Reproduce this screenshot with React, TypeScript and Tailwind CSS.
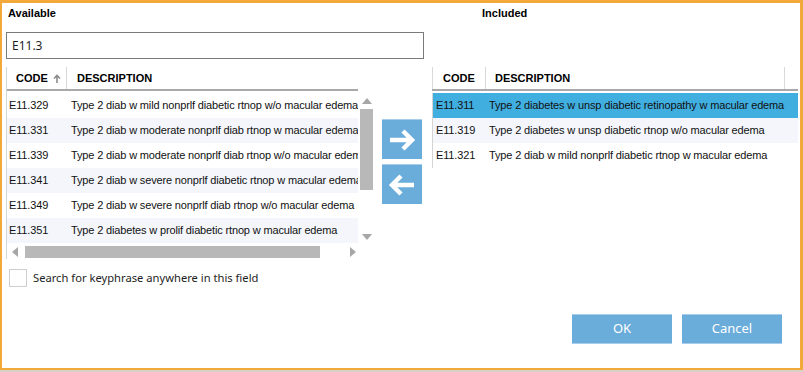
import React from "react";

const available = [
  ["E11.329", "Type 2 diab w mild nonprlf diabetic rtnop w/o macular edema"],
  ["E11.331", "Type 2 diab w moderate nonprlf diab rtnop w macular edema"],
  ["E11.339", "Type 2 diab w moderate nonprlf diab rtnop w/o macular edema"],
  ["E11.341", "Type 2 diab w severe nonprlf diabetic rtnop w macular edema"],
  ["E11.349", "Type 2 diab w severe nonprlf diab rtnop w/o macular edema"],
  ["E11.351", "Type 2 diabetes w prolif diabetic rtnop w macular edema"],
];

const included = [
  ["E11.311", "Type 2 diabetes w unsp diabetic retinopathy w macular edema"],
  ["E11.319", "Type 2 diabetes w unsp diabetic rtnop w/o macular edema"],
  ["E11.321", "Type 2 diab w mild nonprlf diabetic rtnop w macular edema"],
];

const gridFont = { fontFamily: '"Liberation Sans", Arial, sans-serif' };
const uiFont = { fontFamily: '"Noto Sans", "Open Sans", sans-serif' };

const Triangle = ({ dir }: { dir: "up" | "down" | "left" | "right" }) => {
  const pts = {
    up: "0,6 5,0 10,6",
    down: "0,0 10,0 5,6",
    left: "6,0 6,10 0,5",
    right: "0,0 0,10 6,5",
  }[dir];
  const vertical = dir === "up" || dir === "down";
  return (
    <svg width={vertical ? 10 : 6} height={vertical ? 6 : 10}>
      <polygon points={pts} fill="#a6a6a6" />
    </svg>
  );
};

const ArrowButton = ({ dir }: { dir: "right" | "left" }) => (
  <button className="flex h-[40px] w-[40px] items-center justify-center border-t border-[#a8cdec] bg-[#6aacda]">
    <svg width="28" height="24" viewBox="0 0 28 24">
      {dir === "right" ? (
        <path
          d="M2 12 H24 M15 3 L24 12 L15 21"
          stroke="white"
          strokeWidth="4.5"
          fill="none"
          strokeLinejoin="miter"
        />
      ) : (
        <path
          d="M26 12 H4 M13 3 L4 12 L13 21"
          stroke="white"
          strokeWidth="4.5"
          fill="none"
          strokeLinejoin="miter"
        />
      )}
    </svg>
  </button>
);

const App: React.FC = () => {
  return (
    <div className="h-[372px] w-[803px] overflow-hidden bg-[#d7d2c8]">
      <div className="flex h-[370px] w-[803px] flex-col border-b-2 border-l-2 border-r-[3px] border-t-[3px] border-[#f2a93a] bg-white">
        {/* labels + search */}
        <div className="flex">
          <div className="ml-[4px] w-[418px]">
            <div className="h-[18px] pl-[2px] pt-[4px] text-[11px] font-bold leading-[13px] text-black" style={gridFont}>
              Available
            </div>
            <div
              className="mt-[11px] flex h-[27px] items-center border border-[#7a7a7a] pl-[5px] text-[12px] text-[#1e1e1e]"
              style={uiFont}
            >
              E11.3
            </div>
          </div>
          <div className="ml-[58px] pt-[4px] text-[11px] font-bold leading-[13px] text-black" style={gridFont}>
            Included
          </div>
        </div>

        {/* grids */}
        <div className="mt-[8px] flex" style={gridFont}>
          {/* available grid */}
          <div className="ml-[4px] w-[369px]">
            <div className="flex">
              <div className="w-[352px] border-l border-[#d4d4d4]">
                <div className="flex h-[24px] items-center border-b-2 border-[#a9a9a9] text-[11px] font-bold text-black">
                  <div className="flex h-full w-[60px] items-center gap-[5px] border-r border-[#d9d9d9] pl-[9px]">
                    CODE
                    <svg width="8" height="9" viewBox="0 0 8 9">
                      <path d="M4 9 V2 M1 4.5 L4 1.5 L7 4.5" stroke="#8c8c8c" strokeWidth="1.6" fill="none" />
                    </svg>
                  </div>
                  <div className="pl-[10px]">DESCRIPTION</div>
                </div>
                <div className="mt-[2px] h-[151px] overflow-hidden">
                  {available.map(([code, desc], i) => (
                    <div
                      key={code}
                      className={`flex h-[25px] items-center whitespace-nowrap text-[11px] tracking-[-0.15px] text-[#111] ${i % 2 ? "bg-[#f4f6fc]" : "bg-white"}`}
                    >
                      <div className="w-[64px] shrink-0 pl-[2px]">{code}</div>
                      <div>{desc}</div>
                    </div>
                  ))}
                </div>
              </div>
              {/* vertical scrollbar */}
              <div className="ml-[1px] mt-[26px] flex h-[151px] w-[15px] flex-col items-center">
                <div className="pt-[5px]">
                  <Triangle dir="up" />
                </div>
                <div className="mt-[5px] h-[81px] w-[13px] bg-[#b8b8b8]" />
                <div className="flex-1" />
                <div className="pb-[4px]">
                  <Triangle dir="down" />
                </div>
              </div>
            </div>
            {/* horizontal scrollbar */}
            <div className="flex h-[15px] items-center border-l border-[#d4d4d4] pl-[5px]">
              <Triangle dir="left" />
              <div className="ml-[7px] h-[12px] w-[295px] bg-[#b8b8b8]" />
              <div className="ml-[30px]">
                <Triangle dir="right" />
              </div>
            </div>
          </div>

          {/* move buttons */}
          <div className="ml-[7px] mt-[52px] flex flex-col gap-[5px]">
            <ArrowButton dir="right" />
            <ArrowButton dir="left" />
          </div>

          {/* included grid */}
          <div className="ml-[10px] w-[366px]">
            <div className="flex h-[24px] items-center border-b-2 border-[#a9a9a9] text-[11px] font-bold text-black">
              <div className="flex h-full w-[54px] items-center border-l border-r border-[#d9d9d9] pl-[10px]">CODE</div>
              <div className="flex h-full w-[299px] items-center border-r border-[#d9d9d9] pl-[9px]">DESCRIPTION</div>
            </div>
            <div className="mt-[2px] border-l border-[#d4d4d4]">
              {included.map(([code, desc], i) => (
                <div
                  key={code}
                  className={`flex h-[25px] items-center whitespace-nowrap text-[11px] tracking-[-0.15px] text-[#111] ${
                    i === 0 ? "bg-[#41aee0]" : i % 2 ? "bg-[#f4f6fc]" : "bg-white"
                  }`}
                >
                  <div className="w-[56px] shrink-0 pl-[3px]">{code}</div>
                  <div>{desc}</div>
                </div>
              ))}
            </div>
          </div>
        </div>

        {/* checkbox */}
        <div className="ml-[7px] mt-[10px] flex items-center gap-[6px]">
          <div className="h-[18px] w-[18px] border border-[#cfcfcf] bg-white" />
          <span className="text-[11.2px] text-[#1e1e1e]" style={uiFont}>
            Search for keyphrase anywhere in this field
          </span>
        </div>

        {/* dialog buttons */}
        <div className="mr-[18px] mt-[27px] flex justify-end gap-[10px]" style={uiFont}>
          <button className="h-[30px] w-[100px] border-b border-t border-[#a8cdec] bg-[#6aacda] text-[13px] text-white">
            OK
          </button>
          <button className="h-[30px] w-[100px] border-b border-t border-[#a8cdec] bg-[#6aacda] text-[13px] text-white">
            Cancel
          </button>
        </div>
      </div>
    </div>
  );
};

export default App;
